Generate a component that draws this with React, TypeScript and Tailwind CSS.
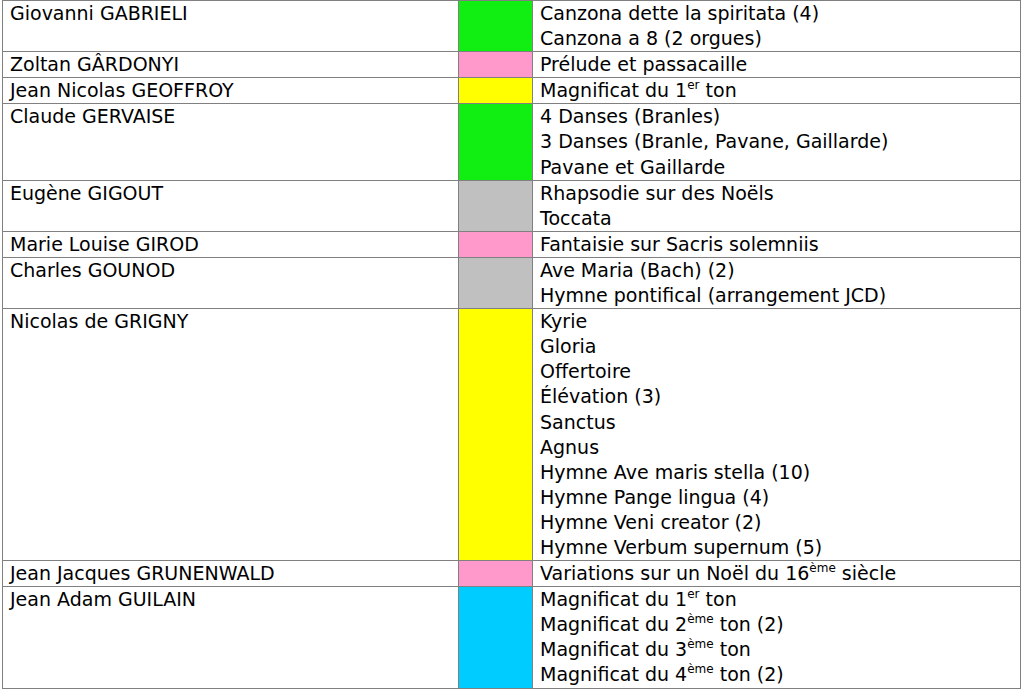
import React from "react";

type Row = { name: string; color: string; works: React.ReactNode[] };

const Sup = ({ children }: { children: React.ReactNode }) => (
  <sup className="text-[12px] relative -top-[1px] align-super leading-none">{children}</sup>
);

const rows: Row[] = [
  {
    name: "Giovanni GABRIELI",
    color: "bg-[#11ee11]",
    works: ["Canzona dette la spiritata (4)", "Canzona a 8 (2 orgues)"],
  },
  { name: "Zoltan GÂRDONYI", color: "bg-[#ff99cc]", works: ["Prélude et passacaille"] },
  {
    name: "Jean Nicolas GEOFFROY",
    color: "bg-[#ffff00]",
    works: [
      <>
        Magnificat du 1<Sup>er</Sup> ton
      </>,
    ],
  },
  {
    name: "Claude GERVAISE",
    color: "bg-[#11ee11]",
    works: ["4 Danses (Branles)", "3 Danses (Branle, Pavane, Gaillarde)", "Pavane et Gaillarde"],
  },
  {
    name: "Eugène GIGOUT",
    color: "bg-[#c0c0c0]",
    works: ["Rhapsodie sur des Noëls", "Toccata"],
  },
  {
    name: "Marie Louise GIROD",
    color: "bg-[#ff99cc]",
    works: ["Fantaisie sur Sacris solemniis"],
  },
  {
    name: "Charles GOUNOD",
    color: "bg-[#c0c0c0]",
    works: ["Ave Maria (Bach) (2)", "Hymne pontifical (arrangement JCD)"],
  },
  {
    name: "Nicolas de GRIGNY",
    color: "bg-[#ffff00]",
    works: [
      "Kyrie",
      "Gloria",
      "Offertoire",
      "Élévation (3)",
      "Sanctus",
      "Agnus",
      "Hymne Ave maris stella (10)",
      "Hymne Pange lingua (4)",
      "Hymne Veni creator (2)",
      "Hymne Verbum supernum (5)",
    ],
  },
  {
    name: "Jean Jacques GRUNENWALD",
    color: "bg-[#ff99cc]",
    works: [
      <>
        Variations sur un Noël du 16<Sup>ème</Sup> siècle
      </>,
    ],
  },
  {
    name: "Jean Adam GUILAIN",
    color: "bg-[#00ccff]",
    works: [
      <>
        Magnificat du 1<Sup>er</Sup> ton
      </>,
      <>
        Magnificat du 2<Sup>ème</Sup> ton (2)
      </>,
      <>
        Magnificat du 3<Sup>ème</Sup> ton
      </>,
      <>
        Magnificat du 4<Sup>ème</Sup> ton (2)
      </>,
    ],
  },
];

export default function App() {
  return (
    <div className="w-[1024px] h-[691px] bg-white pl-[2px] overflow-hidden">
      <table
        className="border-collapse text-[19px] leading-[25.1px] text-black"
        style={{ fontFamily: "'DejaVu Sans', Lato, sans-serif" }}
      >
        <colgroup>
          <col className="w-[456px]" />
          <col className="w-[74px]" />
          <col className="w-[488px]" />
        </colgroup>
        <tbody>
          {rows.map((row) => (
            <tr key={row.name}>
              <td className="border border-[#808080] px-[7px] align-top">{row.name}</td>
              <td className={`border border-[#808080] ${row.color}`}></td>
              <td className="border border-[#808080] px-[7px] align-top">
                {row.works.map((w, i) => (
                  <div key={i}>{w}</div>
                ))}
              </td>
            </tr>
          ))}
        </tbody>
      </table>
    </div>
  );
}
